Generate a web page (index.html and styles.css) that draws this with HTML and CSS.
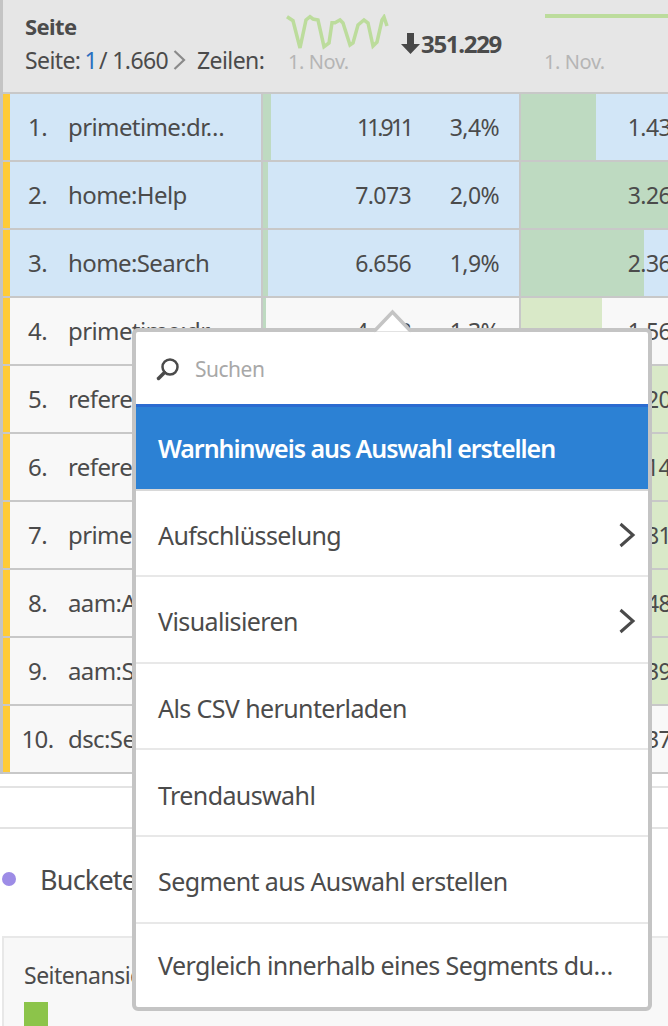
FILE: index.html
```html
<!DOCTYPE html>
<html lang="de">
<head>
<meta charset="utf-8">
<title>Seite</title>
<link rel="stylesheet" href="styles.css">
</head>
<body>
<div class="page">
  <div class="table">
    <div class="head">
      <div class="head-dim">
        <div class="head-title">Seite</div>
        <div class="pager"><span>Seite:</span><span class="cur">1</span><span>/ 1.660</span>
          <svg class="pg-chev" width="13" height="20" viewBox="0 0 13 20"><path d="M1.500 1 11 10l-9.500 9" fill="none" stroke="#8a8a8a" stroke-width="2.200"/></svg>
          <span class="rows">Zeilen:</span></div>
      </div>
      <div class="head-m1">
        <div class="spark-wrap">
          <svg class="spark" width="104" height="38" viewBox="0 0 104 38"><polyline fill="none" stroke="#bcdc9c" stroke-width="3.500" points="1,2.700 7,6.700 14,34 20,6 24,2.700 27,5 32,6 38,32.700 43,29 46,8.700 49,8.700 54,6 57,9 64,31 67,29 72,11 78,6 82,9 87,32 91,28 96,6 98,3 101,12"/></svg>
          <div class="date">1. Nov.</div>
        </div>
        <div class="total"><svg width="20" height="23" viewBox="0 0 20 23"><path d="M6 1h7v11h6L9.500 22 0 12h6z" fill="#484848"/></svg><span>351.229</span></div>
      </div>
      <div class="head-m2">
        <div class="flat"></div>
        <div class="date">1. Nov.</div>
      </div>
    </div>
    <div class="row sel"><div class="dim"><span class="n">1.</span><span>primetime:dr…</span></div><div class="m1"><i class="mbar" style="width:8px"></i><span class="v tight">11.911</span><span class="p">3,4%</span></div><div class="m2"><i style="width:75px"></i><span>1.43</span></div></div>
    <div class="row sel"><div class="dim"><span class="n">2.</span><span>home:Help</span></div><div class="m1"><i class="mbar" style="width:5px"></i><span class="v">7.073</span><span class="p">2,0%</span></div><div class="m2"><i style="width:148px"></i><span>3.26</span></div></div>
    <div class="row sel"><div class="dim"><span class="n">3.</span><span>home:Search</span></div><div class="m1"><i class="mbar" style="width:5px"></i><span class="v">6.656</span><span class="p">1,9%</span></div><div class="m2"><i style="width:123px"></i><span>2.36</span></div></div>
    <div class="row"><div class="dim"><span class="n">4.</span><span>primetime:dr…</span></div><div class="m1"><i class="mbar" style="width:3px"></i><span class="v">4.468</span><span class="p">1,3%</span></div><div class="m2"><i style="width:81px"></i><span>1.56</span></div></div>
    <div class="row"><div class="dim"><span class="n">5.</span><span>referer:x</span></div><div class="m1"></div><div class="m2"><i style="width:147px"></i><span>20</span></div></div>
    <div class="row"><div class="dim"><span class="n">6.</span><span>referer:y</span></div><div class="m1"></div><div class="m2"><i style="width:147px"></i><span>14</span></div></div>
    <div class="row"><div class="dim"><span class="n">7.</span><span>primetime:x</span></div><div class="m1"></div><div class="m2"><i style="width:147px"></i><span>81</span></div></div>
    <div class="row"><div class="dim"><span class="n">8.</span><span>aam:Abc</span></div><div class="m1"></div><div class="m2"><i style="width:147px"></i><span>48</span></div></div>
    <div class="row"><div class="dim"><span class="n">9.</span><span>aam:Seg</span></div><div class="m1"></div><div class="m2"><i style="width:147px"></i><span>39</span></div></div>
    <div class="row"><div class="dim"><span class="n">10.</span><span>dsc:Seite</span></div><div class="m1"></div><div class="m2"><span>37</span></div></div>
  </div>
  <div class="rule-gap"></div>
  <div class="bucket"><span class="dot"></span><span>Bucketerstellung</span></div>
  <div class="card">
    <div class="card-title">Seitenansichten</div>
    <div class="swatch"></div>
  </div>
</div>
<div class="menu">
  <svg class="notch" width="42" height="26" viewBox="0 0 42 26"><path d="M2 23.500 20.500 4 39 23.500" fill="#fff" stroke="#c4c4c4" stroke-width="3.500"/><path d="M3 24h35v2H3z" fill="#fff"/></svg>
  <div class="search">
    <svg width="24" height="24" viewBox="0 0 24 24"><circle cx="14" cy="10" r="7.500" fill="none" stroke="#4a4a4a" stroke-width="2.500"/><path d="M8.500 15.500 2.500 21.500" stroke="#4a4a4a" stroke-width="3.500" stroke-linecap="round"/></svg>
    <span>Suchen</span>
  </div>
  <div class="item active">Warnhinweis aus Auswahl erstellen</div>
  <div class="item"><span>Aufschlüsselung</span><svg width="18" height="26" viewBox="0 0 18 26"><path d="M2.500 2 15 13 2.500 24" fill="none" stroke="#4a4a4a" stroke-width="3"/></svg></div>
  <div class="item"><span>Visualisieren</span><svg width="18" height="26" viewBox="0 0 18 26"><path d="M2.500 2 15 13 2.500 24" fill="none" stroke="#4a4a4a" stroke-width="3"/></svg></div>
  <div class="item">Als CSV herunterladen</div>
  <div class="item">Trendauswahl</div>
  <div class="item">Segment aus Auswahl erstellen</div>
  <div class="item last">Vergleich innerhalb eines Segments du…</div>
</div>
</body>
</html>
```
FILE: styles.css
```css
* { box-sizing: border-box; }
html, body { margin: 0; padding: 0; }
body { width: 668px; height: 1026px; overflow: hidden; background: #fff; font-family: "Noto Sans", "Open Sans", sans-serif; color: #4b4b4b; position: relative; }
.page { width: 668px; height: 1026px; overflow: hidden; }
.table { width: 668px; border-left: 3px solid #c4c4c4; }
.head { height: 94px; background: #e6e6e6; border-bottom: 2px solid #c8c8c8; display: flex; }
.head-dim { width: 258px; padding: 12px 0 0 22px; flex: none; }
.head-title { font-size: 22px; font-weight: 700; line-height: 28px; letter-spacing: -0.6px; }
.pager { display: flex; align-items: center; gap: 2px; font-size: 23px; line-height: 28px; margin-top: 6px; letter-spacing: -0.6px; white-space: nowrap; }
.cur { color: #2a6fc0; margin-left: 2px; }
.pg-chev { margin-left: 3px; flex: none; }
.rows { margin-left: 9px; }
.head-m1 { width: 259px; flex: none; display: flex; }
.spark-wrap { width: 126px; padding: 14px 0 0 25px; flex: none; }
.spark { display: block; }
.date { color: #b5b5b5; font-size: 20px; line-height: 24px; letter-spacing: -0.4px; margin-top: -2px; padding-left: 2px; white-space: nowrap; }
.total { display: flex; align-items: center; font-size: 24px; font-weight: 700; letter-spacing: -1.3px; padding: 30px 0 0 14px; height: 56px; }
.head-m2 { flex: 1; padding: 14px 0 0 25px; }
.flat { height: 4px; background: #bcdc9c; margin-bottom: 34px; }
.head-m2 .date { padding-left: 0; margin-left: -1px; }
.row { height: 68px; display: flex; background: #f8f8f8; border-bottom: 2px solid #c8c8c8; font-size: 24px; letter-spacing: -0.6px; }
.row.sel { background: #d2e6f7; }
.dim { width: 258px; flex: none; border-left: 7px solid #ffcb37; display: flex; align-items: center; padding-bottom: 2px; white-space: nowrap; }
.n { width: 59px; text-align: center; padding-right: 4px; flex: none; margin-right: -1px; }
.m1 { width: 260px; flex: none; display: flex; align-items: center; justify-content: flex-end; position: relative; border-left: 2px solid #c8c8c8; border-right: 2px solid #c8c8c8; padding-right: 20px; font-size: 23px; }
.mbar { position: absolute; left: 0; top: 0; bottom: 0; background: #bedac1; }
.v { width: 70px; text-align: right; margin-right: 34px; position: relative; }
.tight { letter-spacing: -3px; }
.p { width: 54px; text-align: right; position: relative; }
.m2 { flex: 1; position: relative; display: flex; align-items: center; justify-content: flex-end; white-space: nowrap; overflow: hidden; font-size: 23px; }
.m2 i { position: absolute; left: 0; top: 0; bottom: 0; background: #d9e9c8; }
.row.sel .m2 i { background: #bedac1; }
.m2 span { position: relative; margin-right: -3px; }
.rule-gap { height: 43px; margin-top: 12px; border-top: 2px solid #e3e3e3; border-bottom: 2px solid #e3e3e3; }
.bucket { display: flex; align-items: center; height: 56px; margin-top: 22px; padding-left: 2px; font-size: 27px; letter-spacing: -0.8px; gap: 24px; white-space: nowrap; }
.dot { width: 14px; height: 14px; border-radius: 50%; background: #9d8ce6; flex: none; }
.card { margin: 29px -10px 0 2px; height: 120px; background: #f8f8f8; border: 2px solid #e8e8e8; padding: 22px 0 0 20px; }
.card-title { font-size: 23px; line-height: 30px; letter-spacing: -0.5px; white-space: nowrap; }
.swatch { width: 24px; height: 24px; background: #8cc44a; margin-top: 12px; }
.menu { position: absolute; left: 132px; top: 328px; width: 520px; height: 683px; background: #fff; border: 4px solid #c4c4c4; border-radius: 6px; display: flex; flex-direction: column; }
.notch { position: absolute; left: 236px; top: -24px; }
.search { height: 72px; flex: none; display: flex; align-items: center; gap: 15px; padding: 2px 0 0 20px; color: #a8a8a8; font-size: 21px; letter-spacing: -0.5px; }
.item { height: 86.6px; flex: none; display: flex; align-items: center; justify-content: space-between; padding: 4px 12px 0 22px; font-size: 25px; letter-spacing: -0.6px; border-bottom: 2px solid #e8e8e8; white-space: nowrap; }
.item.active { background: #2c81d4; color: #fff; border-top: 3px solid #2b6bd0; border-bottom: 2px solid #d8d8d8; font-weight: 600; letter-spacing: -1.05px; padding-top: 1px; }
.item.last { border-bottom: 0; height: auto; flex: 1 1 0; padding-top: 0; }
```
